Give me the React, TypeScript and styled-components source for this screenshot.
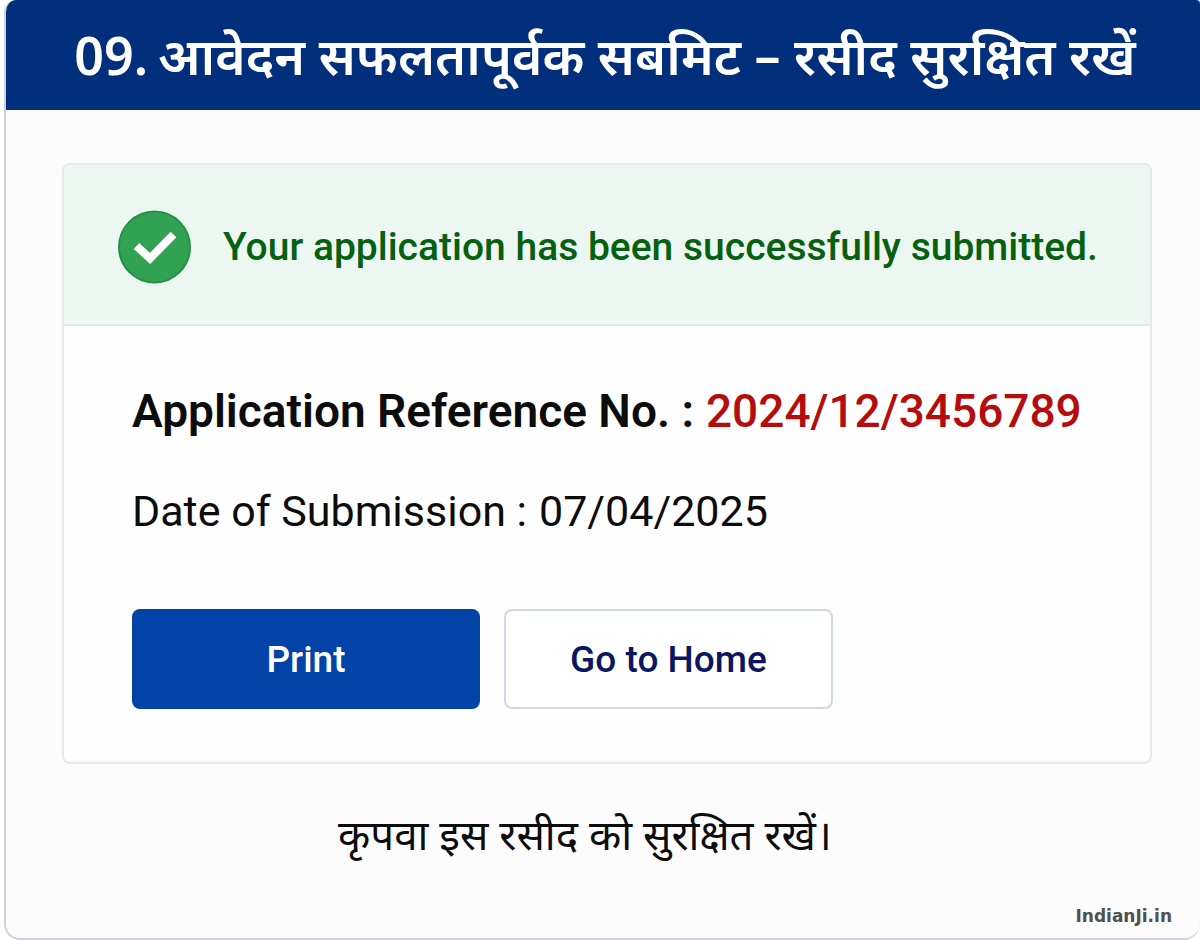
import React from 'react';
import styled, { createGlobalStyle } from 'styled-components';

const Global = createGlobalStyle`
  *, *::before, *::after { box-sizing: border-box; }
  body { margin: 0; background: #ffffff; font-family: Roboto, "Noto Sans", sans-serif; color: #0c0c0c; }
  h1, p, dl, dt, dd { margin: 0; }
`;

const Panel = styled.main`
  display: flex;
  flex-direction: column;
  min-height: 100vh;
  margin-left: 4px;
  border: 2px solid #ced2da;
  border-top: 0;
  border-right: 0;
  border-radius: 12px 4px 16px 16px;
  background: #fcfcfc;
  overflow: hidden;
`;

const Header = styled.header`
  display: flex;
  align-items: center;
  justify-content: center;
  height: 110px;
  padding-left: 4px;
  background: #012f7b;
`;

const Title = styled.h1`
  display: flex;
  gap: 10px;
  color: #ffffff;
  font-family: "Noto Sans", sans-serif;
  font-size: 52px;
  font-weight: 600;
  line-height: 72px;
  white-space: nowrap;
`;

const Content = styled.div`
  flex: 1;
  display: flex;
  flex-direction: column;
  padding: 53px 48px 12px 56px;
`;

const Card = styled.section`
  border: 2px solid #e4e9ec;
  border-radius: 8px;
  background: #fefefe;
  overflow: hidden;
`;

const Banner = styled.div`
  display: flex;
  align-items: center;
  gap: 32px;
  height: 161px;
  padding: 4px 52px 0 54px;
  border-bottom: 2px solid #dcebe3;
  background: #edf7f1;
`;

const BannerText = styled.p`
  color: #056010;
  font-size: 39px;
  font-weight: 500;
  line-height: 48px;
  white-space: nowrap;
`;

const Details = styled.div`
  padding: 57px 68px 53px;
`;

const Row = styled.dl<{ $strong?: boolean }>`
  display: flex;
  gap: 12px;
  margin-bottom: ${(p) => (p.$strong ? 44 : 70)}px;
  font-size: ${(p) => (p.$strong ? 46 : 43)}px;
  font-weight: ${(p) => (p.$strong ? 600 : 400)};
  line-height: 56px;
  white-space: nowrap;
`;

const Reference = styled.dd`
  color: #b50d0d;
  font-weight: 500;
`;

const Actions = styled.div`
  display: flex;
  gap: 24px;
`;

const Button = styled.button<{ $primary?: boolean }>`
  width: ${(p) => (p.$primary ? 348 : 329)}px;
  height: 100px;
  padding: 0;
  border: ${(p) => (p.$primary ? '0' : '2px solid #ced9e5')};
  border-radius: 8px;
  background: ${(p) => (p.$primary ? '#0143a6' : '#ffffff')};
  color: ${(p) => (p.$primary ? '#ffffff' : '#0b1560')};
  font-family: inherit;
  font-size: 37px;
  font-weight: 500;
`;

const Note = styled.p`
  margin: 42px 44px 0 0;
  text-align: center;
  font-family: "Noto Sans", sans-serif;
  font-size: 42px;
  line-height: 56px;
  white-space: nowrap;
`;

const Brand = styled.a`
  margin: auto -20px 0 0;
  align-self: flex-end;
  color: #505050;
  font-family: "DejaVu Sans", sans-serif;
  font-size: 17px;
  font-weight: 700;
  line-height: 20px;
  text-decoration: none;
`;

function SuccessIcon() {
  return (
    <svg width="73" height="74" viewBox="0 0 73 74" aria-hidden="true">
      <circle cx="36.5" cy="37" r="35.5" fill="#30a252" stroke="#259048" strokeWidth="2" />
      <path d="M18.5 36 L32 48.5 L55.5 24.5" fill="none" stroke="#fff" strokeWidth="8" />
    </svg>
  );
}

export default function App() {
  return (
    <>
      <Global />
      <Panel>
        <Header>
          <Title>
            <span>09.</span>
            <span>आवेदन सफलतापूर्वक सबमिट – रसीद सुरक्षित रखें</span>
          </Title>
        </Header>
        <Content>
          <Card>
            <Banner role="status">
              <SuccessIcon />
              <BannerText>Your application has been successfully submitted.</BannerText>
            </Banner>
            <Details>
              <Row $strong>
                <dt>Application Reference No. :</dt>
                <Reference>2024/12/3456789</Reference>
              </Row>
              <Row>
                <dt>Date of Submission :</dt>
                <dd>07/04/2025</dd>
              </Row>
              <Actions>
                <Button type="button" $primary>Print</Button>
                <Button type="button">Go to Home</Button>
              </Actions>
            </Details>
          </Card>
          <Note>कृपवा इस रसीद को सुरक्षित रखें।</Note>
          <Brand href="#">IndianJi.in</Brand>
        </Content>
      </Panel>
    </>
  );
}
